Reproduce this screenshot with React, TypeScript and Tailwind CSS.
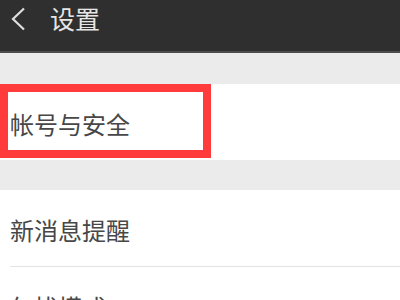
import React from "react";

const rows = [
  { label: "帐号与安全", highlight: true },
];

export default function App() {
  return (
    <div
      className="w-[400px] h-[300px] overflow-hidden bg-[#ebebeb]"
      style={{ fontFamily: '"Noto Sans CJK SC", "Noto Sans", sans-serif' }}
    >
      <header className="h-[53px] bg-[#2f2f2f] border-b-2 border-[#4d4d4d]">
        <div className="h-[37px] flex items-center">
          <svg width="16" height="24" viewBox="0 0 16 24" className="ml-[10px]">
            <path d="M14 1.5 L3 12 L14 22.5" fill="none" stroke="#dedede" strokeWidth="2.2" />
          </svg>
          <span className="ml-[24px] text-[25px] leading-none text-[#e6e6e6]">设置</span>
        </div>
      </header>

      <div className="h-[31px]" />

      {rows.map((r) => (
        <div key={r.label} className="relative h-[76px] bg-white flex items-center pl-[10px]">
          <span className="text-[24px] leading-none text-[#474747] mt-[4px]">{r.label}</span>
          <div className="absolute left-0 top-0 w-[211px] h-[74px] border-[8px] border-[#ff3b3b]" />
        </div>
      ))}

      <div className="h-[30px]" />

      <div className="bg-white">
        <div className="h-[76px] flex items-center pl-[10px]">
          <span className="text-[24px] leading-none text-[#474747] mt-[4px]">新消息提醒</span>
        </div>
        <div className="ml-[10px] h-px bg-[#e3e3e3]" />
        <div className="h-[76px] flex items-center pl-[10px]">
          <span className="text-[24px] leading-none text-[#474747] mt-[4px]">勿扰模式</span>
        </div>
      </div>
    </div>
  );
}
